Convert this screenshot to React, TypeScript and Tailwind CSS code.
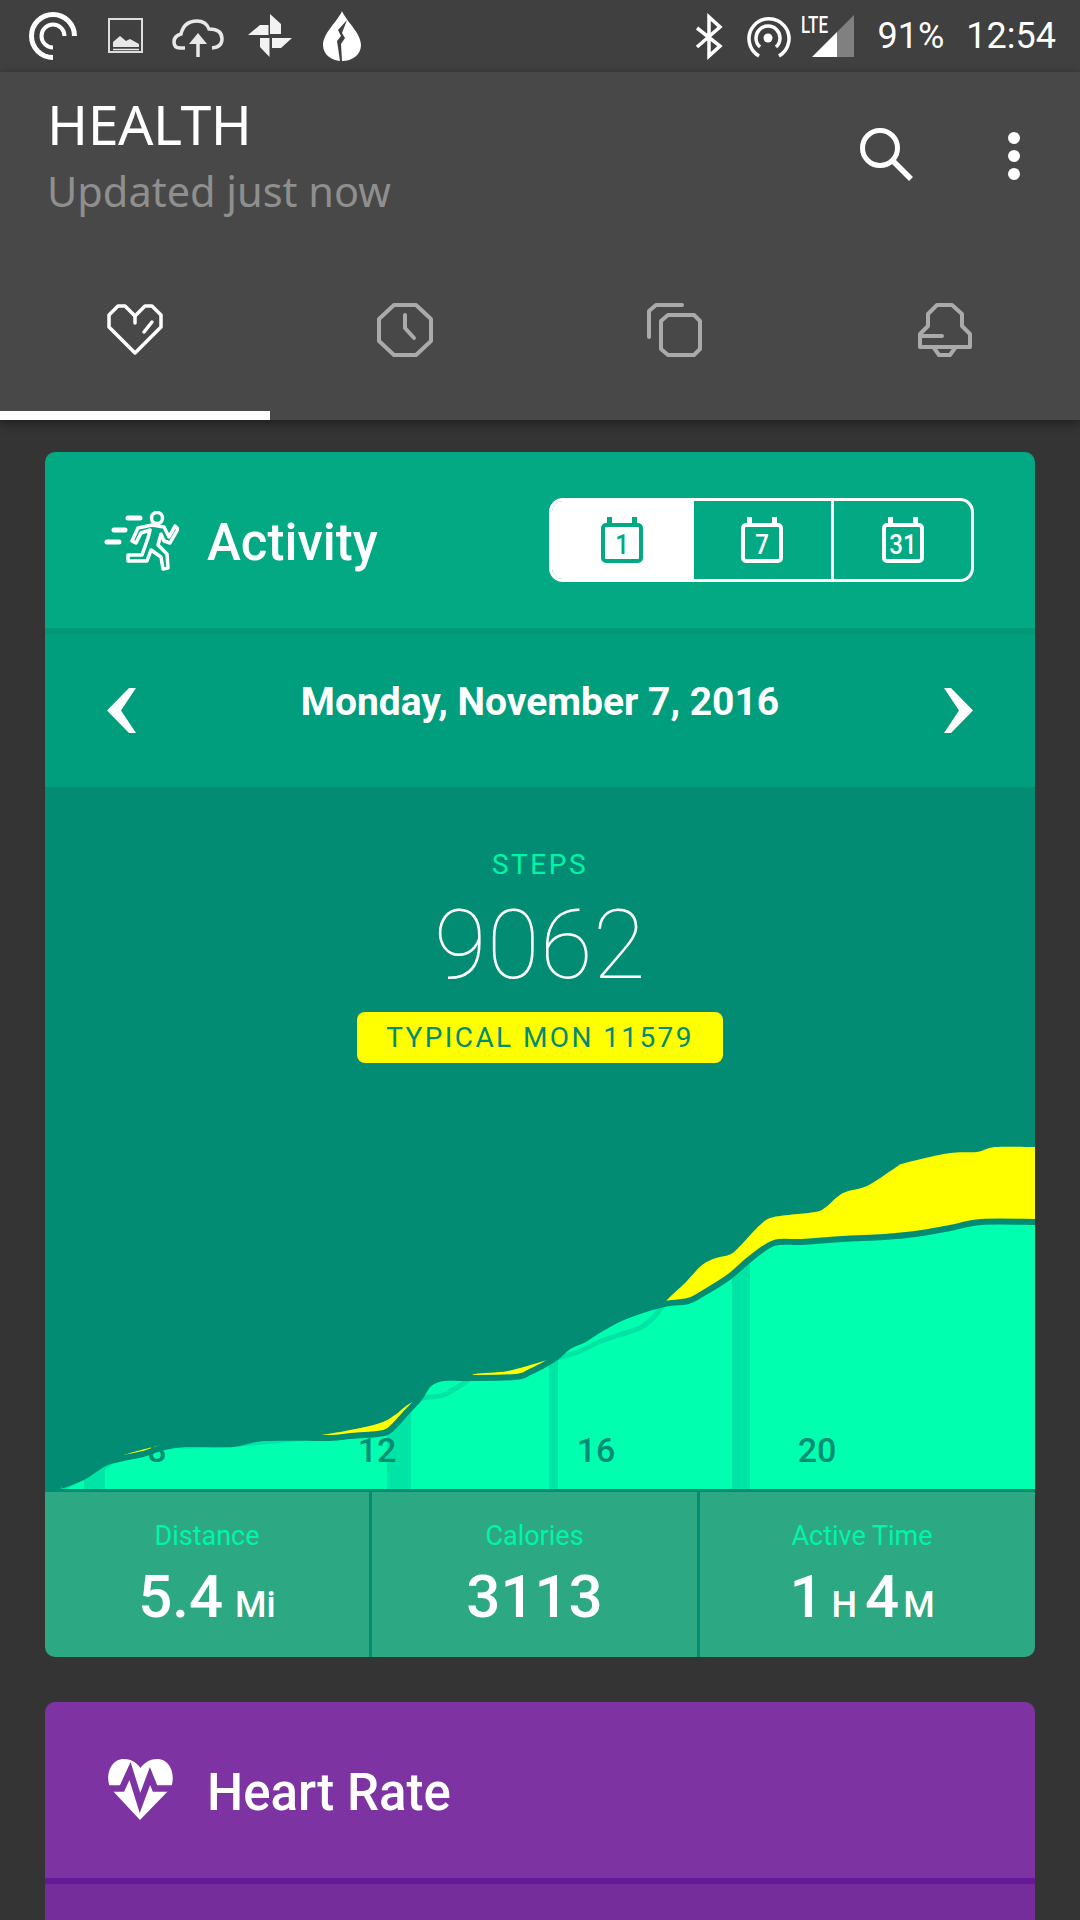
const roboto = "font-['Roboto',sans-serif]"

type Pt = [number, number]

// Catmull-Rom to bezier, chart curves come out soft like the reference
function smooth(pts: Pt[]) {
  let d = `M${pts[0][0]} ${pts[0][1]}`
  for (let i = 0; i < pts.length - 1; i++) {
    const p0 = pts[i - 1] || pts[i]
    const p1 = pts[i]
    const p2 = pts[i + 1]
    const p3 = pts[i + 2] || p2
    const k = 0.16
    d += ` C${p1[0] + (p2[0] - p0[0]) * k} ${p1[1] + (p2[1] - p0[1]) * k} ${p2[0] - (p3[0] - p1[0]) * k} ${p2[1] - (p3[1] - p1[1]) * k} ${p2[0]} ${p2[1]}`
  }
  return d
}

const actual: Pt[] = ([
  [61, 1489], [74, 1484], [85, 1479], [105, 1466], [123, 1461], [143, 1457], [164, 1450], [185, 1447], [233, 1447],
  [264, 1441], [329, 1441], [350, 1439], [384, 1436], [395, 1428], [405, 1417], [419, 1402], [429, 1387], [443, 1381],
  [467, 1381], [515, 1380], [530, 1375], [554, 1362], [568, 1350], [585, 1342], [599, 1333], [619, 1322], [643, 1313],
  [664, 1307], [688, 1304], [702, 1297], [729, 1280], [750, 1262], [774, 1246], [802, 1245], [843, 1242], [884, 1240],
  [915, 1237], [950, 1231], [981, 1225], [1035, 1225],
] as Pt[]).map(([x, y]) => [x, y - 3] as Pt)

const typical: Pt[] = [
  [61, 1489], [105, 1466], [121, 1456], [167, 1444], [185, 1446], [264, 1442], [328, 1434], [377, 1424], [395, 1415],
  [406, 1406], [422, 1398], [443, 1395], [467, 1381], [475, 1374], [508, 1371], [544, 1361], [557, 1358], [578, 1352],
  [599, 1342], [619, 1335], [640, 1328], [654, 1317], [667, 1300], [685, 1283], [702, 1265], [716, 1258], [731, 1254],
  [743, 1243], [760, 1225], [774, 1217], [815, 1212], [826, 1207], [843, 1193], [867, 1186], [895, 1168], [905, 1163],
  [950, 1153], [977, 1152], [995, 1147], [1035, 1147],
]

function StatusBar() {
  return (
    <div className={`flex h-[72px] shrink-0 items-center justify-between bg-[#404040] ${roboto}`}>
      <div className="flex">
        <svg viewBox="0 0 380 72" className="h-[72px] w-[380px]" fill="none">
          <path d="M74.5 36A21.5 21.5 0 1 0 53 57.500" stroke="#fff" strokeWidth="5" />
          <path d="M64.500 36A11.500 11.500 0 1 0 53 47.500" stroke="#fff" strokeWidth="4" />
          <rect x="109" y="19" width="33" height="33" stroke="#ddd" strokeWidth="2" />
          <path d="M113 47V42L120 36L126 41L130 39L139 44V47Z" fill="#e8e8e8" />
          <path d="M113 49.500H139" stroke="#e8e8e8" strokeWidth="1.500" />
          <path d="M185 48H180Q174 48 174 42Q174 36 181 34Q184 21 197 21Q206 21 209 29Q222 29 222 39Q222 47 212 48" stroke="#e8e8e8" strokeWidth="3.500" />
          <path d="M198 57V40" stroke="#e8e8e8" strokeWidth="3.500" />
          <path d="M198 33L189 44H207Z" fill="#e8e8e8" />
          <path d="M270 14L281 24V34H270ZM248 35L260 25H268.500V35ZM292 38L281 48H272V38ZM260 38H269.500V57L260 47Z" fill="#f2f2f2" />
          <path d="M342 11C346 21 361 33 361 45C361 55 352 61 342 61C332 61 323 55 323 45C323 33 338 21 342 11Z" fill="#fff" />
          <path d="M347 20L338 30L341 36L337 41L340 61H342L341 44L345 38L342 33Z" fill="#404040" />
        </svg>
      </div>
      <div className="flex items-center">
        <svg viewBox="690 0 170 72" className="h-[72px] w-[170px]" fill="none">
          <path d="M697 28L720 46L709 56V17L720 27L697 47" stroke="#fff" strokeWidth="3.500" />
          <circle cx="768" cy="38" r="4.500" fill="#fff" />
          <path d="M760 47A12 12 0 1 1 776 47" stroke="#fff" strokeWidth="3.500" />
          <path d="M759 56A20 20 0 1 1 779 56" stroke="#fff" strokeWidth="3.500" />
          <text x="801" y="33" fontSize="24" fontWeight="500" fill="#fff" textLength="27" lengthAdjust="spacingAndGlyphs">LTE</text>
          <path d="M812 57L837 32V57Z" fill="#fff" />
          <path d="M837 32L854 15V57H837Z" fill="#808080" />
        </svg>
        <span className="ml-[18px] text-[36px] leading-none text-white">91%</span>
        <span className="ml-[22px] mr-[24px] text-[36px] leading-none text-white">12:54</span>
      </div>
    </div>
  )
}

function TabIcons() {
  return (
    <div className="grid grid-cols-4">
      <div className="flex h-[126px] items-center justify-center pb-[36px]">
        <svg viewBox="106 303 58 54" className="h-[54px] w-[58px]" fill="none" stroke="#fff" strokeWidth="3.500" strokeLinecap="round" strokeLinejoin="round">
          <path d="M135 353L109 327V315L118 306H125L135 316L145 306H152L161 315V327Z" />
          <path d="M135 316V323M144 332L152 322" />
        </svg>
      </div>
      <div className="flex h-[126px] items-center justify-center pb-[36px]">
        <svg viewBox="376 303 58 54" className="h-[54px] w-[58px]" fill="none" stroke="#aaa" strokeWidth="4" strokeLinecap="round" strokeLinejoin="round">
          <path d="M394 305H416L431 319V341L416 355H394L379 341V319Z" />
          <path d="M405 315V328L414 338" />
        </svg>
      </div>
      <div className="flex h-[126px] items-center justify-center pb-[36px]">
        <svg viewBox="646 303 58 54" className="h-[54px] w-[58px]" fill="none" stroke="#aaa" strokeWidth="4" strokeLinecap="round" strokeLinejoin="round">
          <path d="M668 315H694L700 321V349L694 355H668L661 349V321Z" />
          <path d="M649 337V311L656 305H682" />
        </svg>
      </div>
      <div className="flex h-[126px] items-center justify-center pb-[36px]">
        <svg viewBox="916 303 58 54" className="h-[54px] w-[58px]" fill="none" stroke="#aaa" strokeWidth="4" strokeLinecap="round" strokeLinejoin="round">
          <path d="M920 347V334L928 326V314L937 305H952L962 314V326L970 334V347Z" />
          <path d="M920 336H942M934 348L939 355H950L955 348" />
        </svg>
      </div>
    </div>
  )
}

function AppBar() {
  return (
    <div className="relative z-10 flex h-[348px] shrink-0 flex-col bg-[#484848] shadow-[0_3px_10px_rgba(0,0,0,0.45)]">
      <div className="flex h-[120px] items-start justify-between pl-[47px]">
        <div className="pt-[20px] font-['Noto_Sans',sans-serif]">
          <div className="text-[55.500px] leading-[64px] tracking-[-0.5px] text-white">HEALTH</div>
          <div className="mt-[10px] text-[41.500px] leading-[50px] text-[#8f8f8f]">Updated just now</div>
        </div>
        <svg viewBox="855 72 170 120" className="mr-[55px] h-[120px] w-[170px]" fill="none">
          <circle cx="880" cy="148" r="17.500" stroke="#fff" strokeWidth="5" />
          <path d="M893 161L911 179" stroke="#fff" strokeWidth="5.500" />
          <circle cx="1014" cy="138" r="6" fill="#fff" />
          <circle cx="1014" cy="156" r="6" fill="#fff" />
          <circle cx="1014" cy="174" r="6" fill="#fff" />
        </svg>
      </div>
      <div className="mt-auto">
        <TabIcons />
        <div className="h-[9px] w-[270px] bg-white" />
      </div>
    </div>
  )
}

function CalendarIcon({ label, color }: { label: string; color: string }) {
  return (
    <svg viewBox="0 0 42 46" className="h-[46px] w-[42px]" fill="none">
      <rect x="2" y="8" width="38" height="36" rx="3" stroke={color} strokeWidth="4" />
      <rect x="6" y="0" width="5" height="8" fill={color} />
      <rect x="31" y="0" width="5" height="8" fill={color} />
      <text transform="translate(21 37) scale(0.86 1)" textAnchor="middle" fontSize="28" fontWeight="500" fill={color} className={roboto}>{label}</text>
    </svg>
  )
}

function RangeSwitch() {
  return (
    <div className="flex h-[84px] w-[425px] overflow-hidden rounded-[14px] border-[3px] border-white">
      <div className="flex w-[142px] items-center justify-center bg-white pr-[3px]">
        <CalendarIcon label="1" color="#02a982" />
      </div>
      <div className="flex w-[140px] items-center justify-center border-r-[3px] border-white pr-[2px]">
        <CalendarIcon label="7" color="#fff" />
      </div>
      <div className="flex flex-1 items-center justify-center">
        <CalendarIcon label="31" color="#fff" />
      </div>
    </div>
  )
}

function Chart() {
  const area = (pts: Pt[]) => `${smooth(pts)} L1035 1489 L${pts[0][0]} 1489 Z`
  return (
    <svg viewBox="45 1100 990 389" className="mt-auto block h-[389px] w-[990px]" fill="none">
      <defs>
        <clipPath id="actual-area">
          <path d={area(actual)} />
        </clipPath>
      </defs>
      <path d={area(typical)} fill="#ffff00" />
      <path d={area(actual)} fill="#00ffae" />
      <g clipPath="url(#actual-area)">
        <path d={smooth(typical)} stroke="#00e5a5" strokeWidth="5" />
        <rect x="84" y="1400" width="21" height="89" fill="#00e5a5" />
        <rect x="387" y="1380" width="24" height="109" fill="#00e5a5" />
        <rect x="549" y="1340" width="9" height="149" fill="#00e5a5" />
        <rect x="732" y="1240" width="18" height="249" fill="#00e5a5" />
      </g>
      <path d={smooth(actual)} stroke="#028c74" strokeWidth="6" />
      <g fontSize="34" fontWeight="500" fill="#028c74" textAnchor="middle" className={roboto}>
        <text x="157" y="1462">8</text>
        <text x="377" y="1462">12</text>
        <text x="596" y="1462">16</text>
        <text x="817" y="1462">20</text>
      </g>
    </svg>
  )
}

function ActivityCard() {
  return (
    <div className={`mx-[45px] mt-[32px] shrink-0 overflow-hidden rounded-[10px] ${roboto}`}>
      <div className="flex h-[176px] items-start bg-[#02a982] pl-[58px] pt-[46px]">
        <svg viewBox="103 511 76 60" className="mt-[13px] h-[60px] w-[76px]" fill="none" stroke="#fff" strokeLinecap="round" strokeLinejoin="round">
          <circle cx="157" cy="518" r="5.500" strokeWidth="3.500" />
          <path d="M128 518H140M114 530H125M107 542H119" strokeWidth="5" />
          <path d="M152 525L164 527L169 537L175 526L178 529L170 543L164 541L161 534L158 545L167 554L168 568L163 569L161 557L151 550L147 561L128 561V555L142 555L148 538L150 530L141 533L136 543L132 541L138 528Z" strokeWidth="3.500" />
        </svg>
        <div className="ml-[28px] mt-[15px] text-[51px] font-medium leading-[60px] text-white">Activity</div>
        <div className="ml-auto mr-[61px]">
          <RangeSwitch />
        </div>
      </div>
      <div className="h-[6px] bg-[#019877]" />
      <div className="flex h-[153px] items-start justify-between bg-[#009e7c] pl-[62px] pr-[62px]">
        <svg viewBox="0 0 29 45" className="mt-[54px] h-[45px] w-[29px]" fill="none">
          <path d="M22 0H29L14 22.500L29 45H22L0 22.500Z" fill="#fff" />
        </svg>
        <div className="mt-[43px] text-[39px] font-bold leading-[50px] text-white">Monday, November 7, 2016</div>
        <svg viewBox="0 0 29 45" className="mt-[54px] h-[45px] w-[29px]" fill="none">
          <path d="M7 0H0L15 22.500L0 45H7L29 22.500Z" fill="#fff" />
        </svg>
      </div>
      <div className="flex h-[702px] flex-col items-center bg-[#028c74]">
        <div className="mt-[62px] text-[28px] leading-[32px] tracking-[2.500px] text-[#00f5a8]">STEPS</div>
        <div className="mt-[8px] text-[96px] font-thin leading-[112px] tracking-[0.5px] text-white">9062</div>
        <div className="mt-[11px] flex h-[51px] w-[366px] items-center justify-center rounded-[8px] bg-[#ffff00] text-[28px] leading-none tracking-[2.400px] text-[#028c74]">
          TYPICAL MON 11579
        </div>
        <Chart />
      </div>
      <div className="h-[3px] bg-[#028c74]" />
      <div className="flex h-[165px] bg-[#2ca883] text-center text-white">
        <div className="w-[327px] border-r-[3px] border-[#028c74] pt-[28px]">
          <div className="text-[27px] leading-[32px] text-[#00f5a8]">Distance</div>
          <div className="mt-[9px] text-[60px] font-medium leading-[72px]">5.4<span className="ml-[12px] text-[36px]">Mi</span></div>
        </div>
        <div className="w-[328px] border-r-[3px] border-[#028c74] pt-[28px]">
          <div className="text-[27px] leading-[32px] text-[#00f5a8]">Calories</div>
          <div className="mt-[9px] text-[60px] font-medium leading-[72px]">3113</div>
        </div>
        <div className="flex-1 pr-[11px] pt-[28px]">
          <div className="text-[27px] leading-[32px] text-[#00f5a8]">Active Time</div>
          <div className="mt-[9px] text-[60px] font-medium leading-[72px]">1<span className="mx-[8px] text-[36px]">H</span>4<span className="ml-[4px] text-[36px]">M</span></div>
        </div>
      </div>
    </div>
  )
}

function HeartRateCard() {
  return (
    <div className={`mx-[45px] mt-[45px] shrink-0 overflow-hidden rounded-t-[10px] ${roboto}`}>
      <div className="flex h-[176px] items-start bg-[#7d34a2] pl-[60px] pt-[57px]">
        <svg viewBox="105 1759 71 61" className="h-[61px] w-[71px]" fill="none">
          <path d="M140 1820L112 1790C105 1783 107 1759 124 1759C132 1759 138 1764 140.500 1768C143 1764 149 1759 157 1759C174 1759 176 1783 169 1790Z" fill="#fff" />
          <path d="M105 1788.500H122L130 1771L140 1803L150 1776L155 1788.500H176" stroke="#7d34a2" strokeWidth="6.500" />
        </svg>
        <div className="ml-[31px] mt-[4px] text-[51px] font-medium leading-[60px] text-white">Heart Rate</div>
      </div>
      <div className="h-[6px] bg-[#641a96]" />
      <div className="h-[60px] bg-[#752d9b]" />
    </div>
  )
}

export default function App() {
  return (
    <div className="flex h-[1920px] w-[1080px] flex-col overflow-hidden bg-[#343434]">
      <StatusBar />
      <AppBar />
      <ActivityCard />
      <HeartRateCard />
    </div>
  )
}
